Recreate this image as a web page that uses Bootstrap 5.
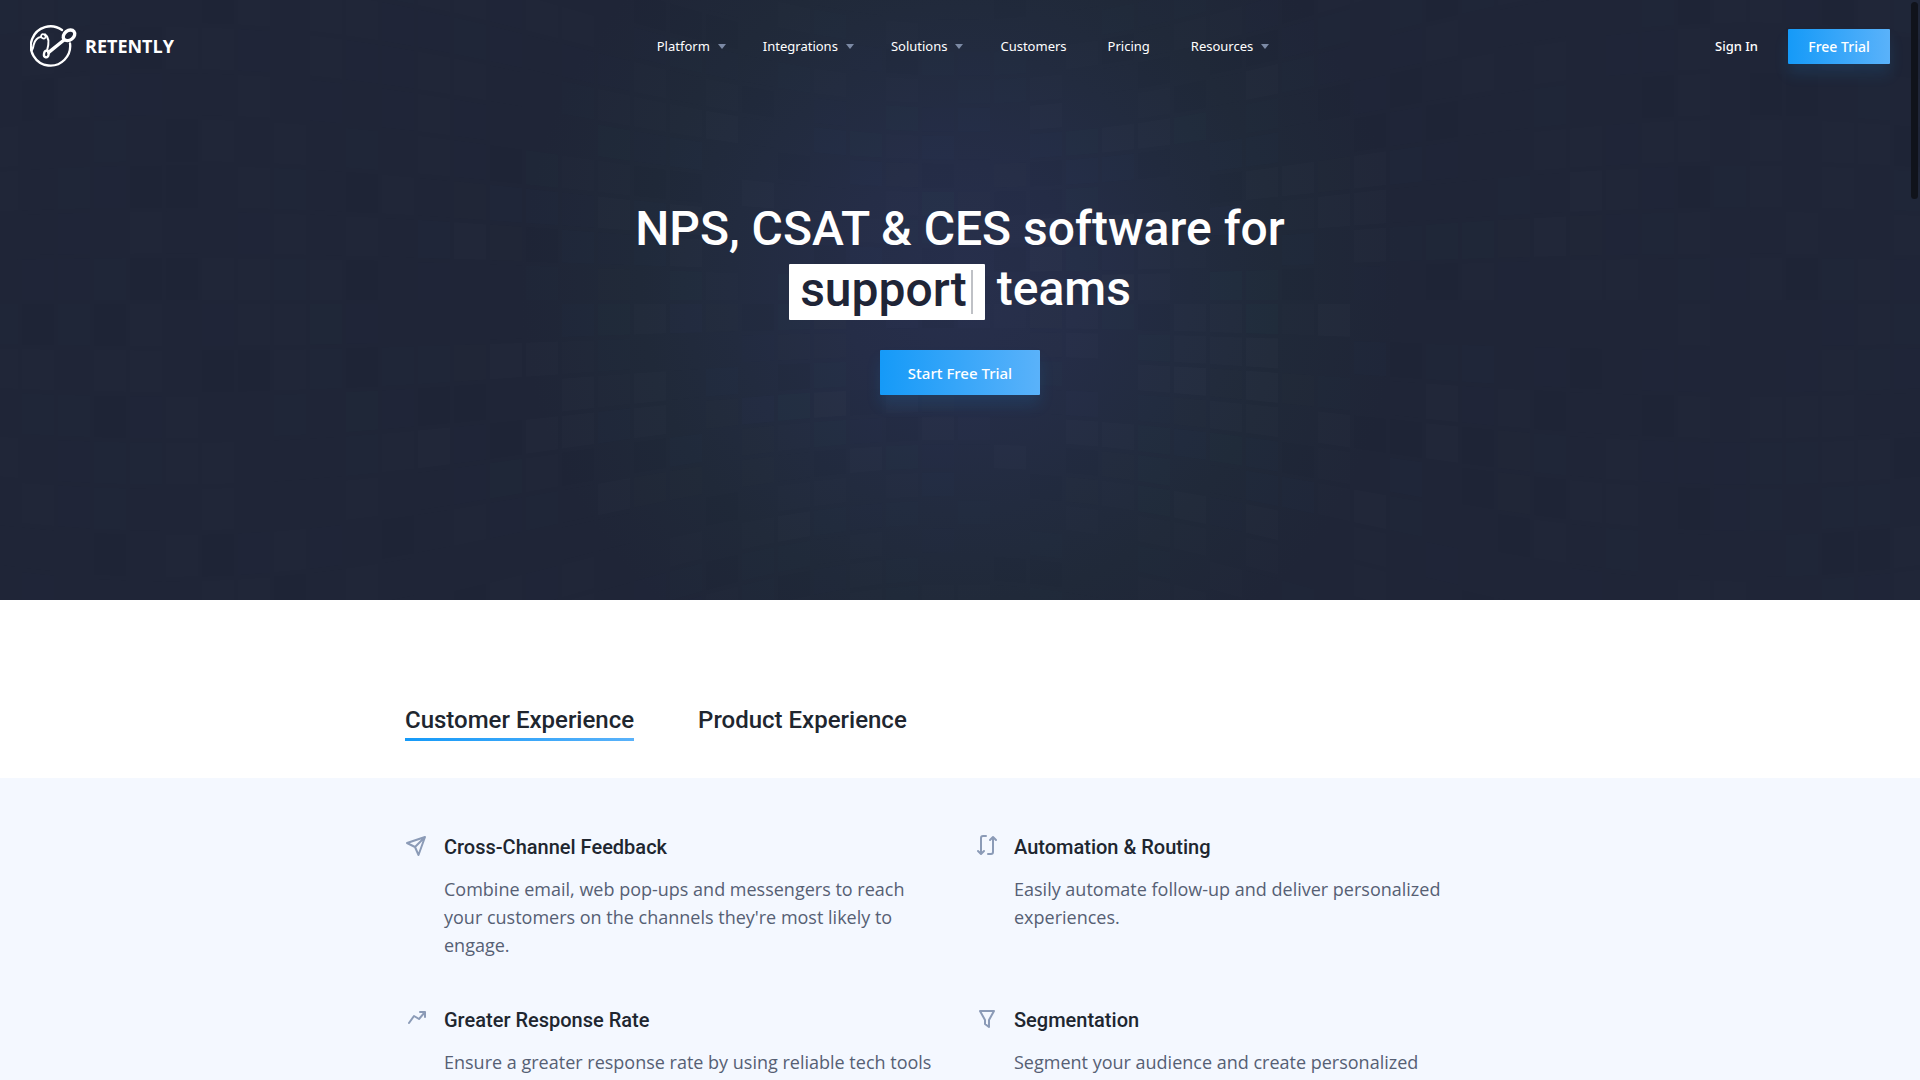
<!DOCTYPE html>
<html lang="en">
<head>
<meta charset="utf-8">
<meta name="viewport" content="width=device-width, initial-scale=1">
<title>Retently</title>
<link href="https://cdn.jsdelivr.net/npm/bootstrap@5.3.0/dist/css/bootstrap.min.css" rel="stylesheet">
<style>
  body { font-family: "Open Sans", sans-serif; color: #20262f; background: #fff; }
  .page { height: 100vh; overflow: hidden; }
  .hero { height: 600px; background-color: #1f2537;
    background-image: radial-gradient(circle at 50% 47%, #272f4c 0, #252d47 120px, #222b3f 230px, #202939 320px, #1f2537 440px); }
  .hero-grid { width: 100%; height: 100%; z-index: 0; }
  .site-bar { padding: 24px 30px 0; font-size: 14px; line-height: 20px; }
  .site-bar > .side { flex: 1 1 0; }
  .brand-name { font-family: "Open Sans", sans-serif; font-weight: 700; font-size: 18px; line-height: 24px; margin-left: 7px; }
  .menu { gap: 41px; font-family: "Noto Sans", sans-serif; font-size: 13px; padding-left: 2px; }
  .menu-link { color: #fff; text-decoration: none; background: none; border: 0; padding: 0; }
  .has-menu { margin-right: -4px; }
  .has-menu::after { content: ""; display: inline-block; margin-left: 8px; vertical-align: 2px;
    border: solid transparent; border-width: 5px 4px 0; border-top-color: #7c8aa5; }
  .sign { font-family: "Noto Sans", sans-serif; font-size: 13px; font-weight: 500; color: #fff; text-decoration: none; margin-right: 30px; }
  .btn-grad { font-family: "Noto Sans", sans-serif; font-weight: 500; color: #fff; border: 0; border-radius: 1px;
    background: linear-gradient(90deg, #159af8, #5ab2fa); box-shadow: 0 10px 15px rgba(21, 154, 248, .12); padding: 0; }
  .btn-grad:hover { color: #fff; }
  .btn-s { width: 102px; height: 35px; font-size: 14px; }
  .btn-l { width: 160px; height: 45px; font-size: 15px; }
  .headline { font-family: Roboto, sans-serif; font-weight: 500; font-size: 48px; line-height: 60px; margin: 131px 0 30px; }
  .typed { display: inline-flex; align-items: center; height: 56px; background: #fff; color: #1f2537; padding: 0 12px 5px 11px; border-radius: 1px; vertical-align: middle; }
  .caret-bar { width: 2px; height: 44px; background: #bfc1c6; margin: 5px 0 0 4px; }
  .wrap { max-width: 1140px; padding: 0 15px; }
  .wrap > .row { --bs-gutter-x: 30px; }
  .tabs { height: 178px; padding-top: 102px; gap: 64px; }
  .tab-link { font-family: Roboto, sans-serif; font-weight: 500; font-size: 24px; line-height: 36px; color: #20262f; background: none; border: 0; border-bottom: 3px solid transparent; padding: 0; height: 39px; }
  .tab-link.active { border-image: linear-gradient(90deg, #159af8, #5ab2fa) 1; }
  .features { background: #f4f8ff; padding-top: 54px; }
  .feature { gap: 15px; padding-bottom: 46px; }
  .feature svg { width: 24px; height: 24px; flex: none; margin-top: 2px; fill: none; stroke: #8b9bb7; stroke-width: 2; stroke-linecap: round; stroke-linejoin: round; }
  .feature h2 { font-family: Roboto, sans-serif; font-weight: 500; font-size: 20px; line-height: 30px; margin: 0 0 13px; color: #20262f; }
  .feature p { font-size: 18px; line-height: 28px; margin: 0; color: #566074; max-width: 492px; }
  .scroll-thumb { right: 2px; top: 2px; width: 7px; height: 197px; border-radius: 4px; background: #10131b; z-index: 5; }
</style>
</head>
<body>
<div class="page d-flex flex-column">
  <header class="hero position-relative text-white flex-shrink-0">
    <svg class="hero-grid position-absolute top-0 start-0" viewBox="0 0 1920 600" preserveAspectRatio="xMidYMid slice" aria-hidden="true"></svg>
    <div class="position-relative">
      <nav class="site-bar d-flex align-items-center" aria-label="Main">
        <div class="side d-flex">
          <a href="#" class="d-flex align-items-center text-white text-decoration-none">
            <svg width="48" height="44" viewBox="11 12 144 132" fill="none" stroke="#fff" stroke-linecap="round" aria-hidden="true">
              <path stroke-width="7" d="M107 30A59 59 0 1 0 131 70"/>
              <ellipse cx="128" cy="46" rx="19" ry="14" transform="rotate(-38 128 46)" stroke-width="10"/>
              <path stroke-width="10" d="M113 60L67 97"/>
              <ellipse cx="60" cy="102" rx="7" ry="10" transform="rotate(12 60 102)" stroke-width="7"/>
              <ellipse cx="51" cy="49" rx="7" ry="6" transform="rotate(35 51 49)" stroke-width="5"/>
              <path stroke-width="6" d="M56 43C67 50 69 68 62 92M44 51C34 52 26 60 22 74C21 84 18 88 16 92"/>
            </svg>
            <span class="brand-name">RETENTLY</span>
          </a>
        </div>
        <div class="menu d-flex">
          <button type="button" class="menu-link has-menu">Platform</button>
          <button type="button" class="menu-link has-menu">Integrations</button>
          <button type="button" class="menu-link has-menu">Solutions</button>
          <a href="#" class="menu-link">Customers</a>
          <a href="#" class="menu-link">Pricing</a>
          <button type="button" class="menu-link has-menu">Resources</button>
        </div>
        <div class="side d-flex justify-content-end align-items-center">
          <a href="#" class="sign">Sign In</a>
          <button type="button" class="btn btn-grad btn-s">Free Trial</button>
        </div>
      </nav>
      <div class="text-center">
        <h1 class="headline">NPS, CSAT &amp; CES software for<br><span class="typed">support<span class="caret-bar"></span></span> teams</h1>
        <button type="button" class="btn btn-grad btn-l">Start Free Trial</button>
      </div>
    </div>
  </header>

  <main class="flex-grow-1 d-flex flex-column">
    <div class="container wrap tabs d-flex align-items-start flex-shrink-0" role="tablist">
      <button type="button" role="tab" aria-selected="true" class="tab-link active">Customer Experience</button>
      <button type="button" role="tab" aria-selected="false" class="tab-link">Product Experience</button>
    </div>
    <section class="features flex-grow-1">
      <div class="container wrap">
        <div class="row">
          <div class="col-md-6 feature d-flex">
            <svg viewBox="0 0 24 24"><path d="M2 9L20 3L13.500 21L10 13ZM10 13L20 3"/></svg>
            <div><h2>Cross-Channel Feedback</h2>
            <p>Combine email, web pop-ups and messengers to reach your customers on the channels they're most likely to engage.</p></div>
          </div>
          <div class="col-md-6 feature d-flex">
            <svg viewBox="0 0 24 24"><path d="M11 2H8Q6 2 6 4V19M3 17L6 20L9 17M13 20H16Q18 20 18 18V3M15 6L18 3L21 6"/></svg>
            <div><h2>Automation &amp; Routing</h2>
            <p>Easily automate follow-up and deliver personalized experiences.</p></div>
          </div>
          <div class="col-md-6 feature d-flex">
            <svg viewBox="0 0 24 24"><path d="M4 16L9 9L14 12L20 5M15 5H20V10"/></svg>
            <div><h2>Greater Response Rate</h2>
            <p>Ensure a greater response rate by using reliable tech tools</p></div>
          </div>
          <div class="col-md-6 feature d-flex">
            <svg viewBox="0 0 24 24"><path d="M5 4H19L14 13V20L10 17V13Z"/></svg>
            <div><h2>Segmentation</h2>
            <p>Segment your audience and create personalized</p></div>
          </div>
        </div>
      </div>
    </section>
  </main>
</div>
<div class="scroll-thumb position-absolute"></div>
<script src="https://cdn.jsdelivr.net/npm/bootstrap@5.3.0/dist/js/bootstrap.bundle.min.js"></script>
<script>
  // Curved wall of faint tiles: columns are evenly spaced, rows spread out away from the centre.
  const grid = document.querySelector('.hero-grid');
  const tints = ['#fff', '#53e0c0', '#7080ff', '#a0b070', '#fff', '#000'];
  let seed = 11;
  const rnd = () => (seed = (seed * 16807) % 2147483647) / 2147483647;
  const spread = x => 28 * (1 + .65 * (1 - Math.cos(Math.PI * (x - 960) / 790)) / 2);
  for (let x = -14; x < 1920; x += 36) {
    for (let k = -11; k < 11; k++) {
      const l = spread(x), r = spread(x + 32), shade = rnd(), tint = rnd();
      if (shade < .25) continue;
      const near = Math.max(0, 1 - Math.hypot((x - 960) / 900, k / 11));
      const p = document.createElementNS('http://www.w3.org/2000/svg', 'polygon');
      p.setAttribute('points', [[x, 304 + k * l], [x + 32, 304 + k * r], [x + 32, 300 + (k + 1) * r], [x, 300 + (k + 1) * l]].join(' '));
      p.setAttribute('fill', tints[Math.floor(tint * tints.length)]);
      p.setAttribute('fill-opacity', (.006 + .014 * near * shade).toFixed(3));
      grid.append(p);
    }
  }
</script>
</body>
</html>
